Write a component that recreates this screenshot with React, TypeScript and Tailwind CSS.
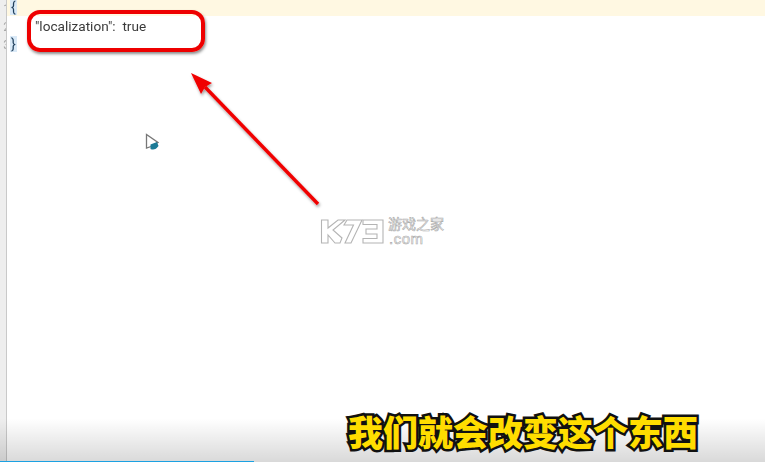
export default function App() {
  return (
    <div className="relative flex h-[462px] w-[765px] overflow-hidden bg-white font-['Roboto','Noto_Sans_CJK_SC',sans-serif]">
      <div className="flex h-full w-[7px] flex-col items-end overflow-hidden border-r border-[#c9c9c9] bg-[#eeeeee] text-[12px] leading-[18px] text-[#a8a8a8] blur-[0.4px]">
        <span className="-mr-[4px]">1</span>
        <span className="-mr-[4px]">2</span>
        <span className="-mr-[4px]">3</span>
      </div>
      <div className="flex min-w-0 flex-1 flex-col">
        <div className="flex h-[16px] items-start bg-[#fff8e2] pl-[3px] text-[14px] text-[#1f3f5c]">
          <span className="bg-[#d9e9f7] px-[1px] leading-[15px] blur-[0.3px]">{"{"}</span>
        </div>
        <div className="h-[21px] pl-[28px] pt-[1px] text-[13.6px] leading-[18px] text-[#3a3a3a] blur-[0.3px]">
          <span>"localization":&nbsp; true</span>
        </div>
        <div className="pl-[3px] text-[14px] leading-[15px] text-[#1f3f5c] blur-[0.3px]">
          <span className="bg-[#d9e9f7] px-[1px]">{"}"}</span>
        </div>
      </div>

      {/* Red highlight rectangle */}
      <div className="absolute left-[27px] top-[10px] h-[42px] w-[178px] rounded-[13px] border-[4px] border-[#ee0000] shadow-[1px_2px_3px_rgba(0,0,0,0.45)] blur-[0.3px]" />

      {/* Arrow */}
      <svg className="absolute left-[180px] top-[60px]" width="150" height="150" viewBox="0 0 150 150">
        <defs>
          <filter id="s" x="-20%" y="-20%" width="140%" height="140%">
            <feDropShadow dx="1" dy="2" stdDeviation="1.5" floodColor="#000" floodOpacity="0.4" />
          </filter>
        </defs>
        <g filter="url(#s)">
          <line x1="138" y1="144" x2="25" y2="27" stroke="#f00000" strokeWidth="3.4" />
          <polygon points="11,13 32,23 25,27 21,34" fill="#f00000" />
        </g>
      </svg>

      {/* Cursor */}
      <svg className="absolute left-[143px] top-[132px] blur-[0.4px]" width="18" height="20" viewBox="0 0 18 20">
        <path d="M3.5 2.5 L3.5 16 L8 14.5 L15 10.5 Z" fill="#fff" stroke="#777" strokeWidth="1.3" />
        <path d="M7.5 12.5 L14 10 L15.5 14 Q12 19 7.5 17 Z" fill="#1c7a96" />
      </svg>

      {/* Watermark */}
      <div className="absolute left-[320px] top-[217px] flex items-start gap-[4px]">
        <svg className="mt-[1px]" width="64" height="27" viewBox="0 0 64 27" fill="#fff" stroke="#b4b4b4" strokeWidth="1.1">
          <path d="M1.5 2 H8 V10 L18 2 H25 L13 12 L22 20 L20 25 H15 L8 17 V25 H1.5 Z" />
          <path d="M27 2 H42 L31 25 H25 L33.5 7 H24 Z" />
          <path d="M43 2 H63 V25 H43 V20.5 H57 V16 H46 V11 H57 V6.5 H43 Z" />
        </svg>
        <div className="flex flex-col items-start text-white [-webkit-text-stroke:0.6px_#aaaaaa]">
          <span className="text-[14px] leading-[15px]">游戏之家</span>
          <span className="ml-[1px] font-['Liberation_Sans'] text-[15px] leading-[13px] tracking-[0.5px]">.com</span>
        </div>
      </div>

      {/* Bottom caption band */}
      <div className="absolute bottom-0 left-0 flex h-[62px] w-full items-start justify-end bg-gradient-to-b from-black/0 from-[30%] to-black/[0.15] pr-[67px] pt-[9px]">
        <span className="font-['Noto_Sans_CJK_SC'] text-[35px] font-black leading-[44px] text-[#ffdd00] [-webkit-text-stroke:5px_#111111] [paint-order:stroke_fill]">
          我们就会改变这个东西
        </span>
      </div>

      {/* Progress bar */}
      <div className="absolute bottom-0 left-0 h-[1px] w-[254px] bg-[#1ba1e2]" />
    </div>
  );
}
